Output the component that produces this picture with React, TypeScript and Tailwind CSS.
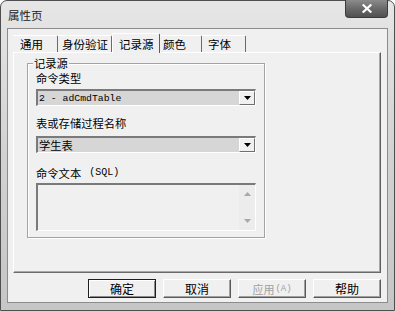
import React from "react";

const tabs = [
  { label: "通用", width: "w-[45px]", pad: "pl-[7px]", active: false },
  { label: "身份验证", width: "w-[54px]", pad: "pl-[4px]", active: false },
  { label: "记录源", width: "w-[48px]", pad: "pl-[6px]", active: true },
  { label: "颜色", width: "w-[42px]", pad: "pl-[3px]", active: false },
  { label: "字体", width: "w-[44px]", pad: "pl-[6px]", active: false },
];

function ComboBox({ value, mono }: { value: string; mono?: boolean }) {
  return (
    <div className="flex h-[17px] w-[220px] border-t-2 border-l-2 border-t-[#7a7a7a] border-l-[#7a7a7a] border-b border-r border-b-white border-r-white bg-[#d6d6d6]">
      <span
        className={`flex-1 pl-[1px] leading-[14px] text-black ${
          mono
            ? "font-['Liberation_Mono',monospace] text-[9.8px] leading-[15px]"
            : "text-[11.3px]"
        }`}
      >
        {value}
      </span>
      {/* drop button */}
      <div className="flex h-full w-[16px] items-center justify-center border-t border-l border-t-white border-l-white border-b border-r border-b-[#707070] border-r-[#707070] bg-[#f0f0f0]">
        <svg width="7" height="4" viewBox="0 0 7 4">
          <polygon points="0,0 7,0 3.5,4" fill="#000" />
        </svg>
      </div>
    </div>
  );
}

export default function App() {
  return (
    <div className="h-[311px] w-[395px] bg-white font-['Noto_Sans_CJK_SC',sans-serif] text-black">
      <div className="flex h-full w-full flex-col rounded-t-[7px] border border-[#4f4f4f] bg-gradient-to-b from-[#e6e6e6] via-[#d2d2d2] to-[#c6c6c6] px-[6px] pb-[7px]">
        {/* Title bar */}
        <div className="flex h-[27px] items-start">
          <span className="mt-[7px] pl-[1px] text-[11.5px] leading-[14px] text-[#1a1a1a]">
            属性页
          </span>
          <div className="ml-auto flex h-[18px] w-[43px] -mt-[1px] items-center justify-center rounded-b-[4px] border border-t-0 border-[#3c3c3c] bg-gradient-to-b from-[#8c8c8c] via-[#6a6a6a] to-[#505050]">
            <svg width="10" height="9" viewBox="0 0 10 9">
              <path
                d="M1.5 1.2 L8.5 7.8 M8.5 1.2 L1.5 7.8"
                stroke="#fff"
                strokeWidth="2.2"
                strokeLinecap="square"
              />
            </svg>
          </div>
        </div>

        {/* Client area */}
        <div className="flex flex-1 flex-col border border-[#8c8c8c] bg-[#f0f0f0] pl-[5px] pr-[6px] pt-[4px]">
          {/* Tabs */}
          <div className="flex h-[19px] items-end">
            {tabs.map((t) => (
              <div
                key={t.label}
                className={`flex items-center ${t.width} ${t.pad} ${
                  t.active
                    ? "relative z-10 -mb-[1px] h-[20px] rounded-t-[2px] border-t border-l border-t-white border-l-white border-r border-r-[#5c5c5c] bg-[#f0f0f0]"
                    : "h-[17px] rounded-tr-[2px] border-t border-t-white border-r border-r-[#6a6a6a]"
                } text-[11.5px] leading-[14px]`}
              >
                {t.label}
              </div>
            ))}
          </div>

          {/* Tab panel */}
          <div className="h-[221px] border-t border-l border-t-white border-l-white border-r border-b border-r-[#5e5e5e] border-b-[#6a6a6a] shadow-[inset_-1px_-1px_0_#a8a8a8] pt-[10px] pl-[13px]">
            {/* Group box */}
            <div className="relative h-[175px] w-[238px] border border-[#a3a3a3] shadow-[inset_1px_1px_0_#fff,1px_1px_0_#fff] pl-[8px] pt-[7px]">
              <span className="absolute -top-[8px] left-[5px] bg-[#f0f0f0] px-[1px] text-[11.3px] leading-[14px]">
                记录源
              </span>

              <div className="text-[11.3px] leading-[14px]">命令类型</div>
              <div className="mt-[4px]">
                <ComboBox value="2 - adCmdTable" mono />
              </div>

              <div className="mt-[10px] text-[11.3px] leading-[14px]">
                表或存储过程名称
              </div>
              <div className="mt-[6px]">
                <ComboBox value="学生表" />
              </div>

              <div className="mt-[13px] flex items-center text-[11.3px] leading-[14px]">
                命令文本
                <span className="ml-[8px] font-['Liberation_Mono',monospace] text-[10px]">
                  (SQL)
                </span>
              </div>

              {/* Text area */}
              <div className="mt-[3px] flex h-[48px] w-[220px] border-t-2 border-l-2 border-t-[#7a7a7a] border-l-[#7a7a7a] border-b border-r border-b-white border-r-white bg-[#f0f0f0]">
                <div className="flex-1" />
                <div className="flex w-[16px] flex-col items-center justify-between bg-[#ececec] py-[7px]">
                  <svg width="7" height="4" viewBox="0 0 7 4">
                    <polygon points="0,4 7,4 3.5,0" fill="#a8a8a8" />
                  </svg>
                  <svg width="7" height="4" viewBox="0 0 7 4">
                    <polygon points="0,0 7,0 3.5,4" fill="#a8a8a8" />
                  </svg>
                </div>
              </div>
            </div>
          </div>

          {/* Buttons */}
          <div className="mt-[6px] flex justify-end gap-[7px]">
            <button className="flex h-[19px] w-[68px] items-center justify-center border border-[#1e1e1e] bg-[#f0f0f0] shadow-[inset_1px_1px_0_#fff,inset_-1px_-1px_0_#8a8a8a] text-[12px] leading-[14px]">
              确定
            </button>
            <button className="flex h-[19px] w-[68px] items-center justify-center border-t border-l border-t-white border-l-white border-b border-r border-b-[#5a5a5a] border-r-[#5a5a5a] bg-[#f0f0f0] shadow-[inset_-1px_-1px_0_#a0a0a0] text-[12px] leading-[14px]">
              取消
            </button>
            <button className="flex h-[19px] w-[68px] items-center justify-center border-t border-l border-t-white border-l-white border-b border-r border-b-[#5a5a5a] border-r-[#5a5a5a] bg-[#f0f0f0] shadow-[inset_-1px_-1px_0_#a0a0a0] text-[11px] leading-[14px] text-[#a0a0a0]">
              应用
              <span className="ml-[1px] font-['Liberation_Mono',monospace] text-[9px]">
                (A)
              </span>
            </button>
            <button className="flex h-[19px] w-[68px] items-center justify-center border-t border-l border-t-white border-l-white border-b border-r border-b-[#5a5a5a] border-r-[#5a5a5a] bg-[#f0f0f0] shadow-[inset_-1px_-1px_0_#a0a0a0] text-[12px] leading-[14px]">
              帮助
            </button>
          </div>
        </div>
      </div>
    </div>
  );
}
